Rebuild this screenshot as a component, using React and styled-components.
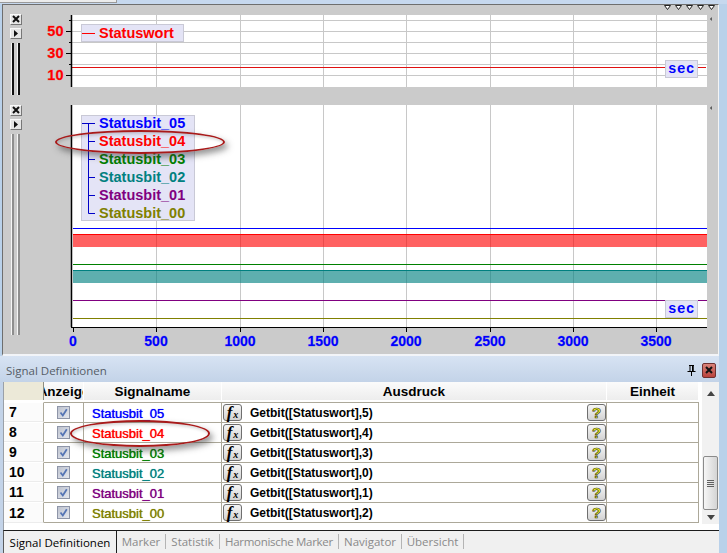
import React from "react";
import styled, { createGlobalStyle } from "styled-components";

const GlobalStyle = createGlobalStyle`
  html, body { margin: 0; padding: 0; background: #b9d1ea; overflow: hidden; }
  * { box-sizing: border-box; }
`;

const Page = styled.div`
  width: 727px;
  height: 553px;
  display: flex;
  flex-direction: column;
  background: #b9d1ea;
  font-family: "Liberation Sans", Arial, sans-serif;
`;

const TopEdge = styled.div`
  height: 4px;
  display: flex;
  background: #c6d8ee;
`;

const TopEdgeTab = styled.div`
  width: 117px;
  height: 3px;
  background: #ececec;
  border-bottom: 1px solid #9a9a9a;
  border-right: 1px solid #9a9a9a;
`;

const ChartPanel = styled.div`
  height: 353px;
  margin: 0 8px 0 2px;
  background: #cbcbcb;
  border-top: 1px solid #6e6e6e;
  border-left: 1px solid #6e6e6e;
  border-right: 1px solid #f4f4f4;
  border-bottom: 2px solid #f2f4f8;
`;

const MarkerRow = styled.div`
  height: 9px;
  display: flex;
  justify-content: flex-end;
  gap: 4px;
  padding-right: 3px;
`;

const MarkerIcon = styled.svg`
  display: block;
`;

const ChartRow = styled.div`
  display: flex;
  align-items: flex-start;
  height: ${(p) => p.$height}px;
  margin-bottom: ${(p) => p.$gap || 0}px;
`;

const Controls = styled.div`
  width: 37px;
  padding-left: 7px;
  display: flex;
  flex-direction: column;
  align-items: flex-start;
`;

const SmallButton = styled.div`
  width: 12px;
  height: 11px;
  margin-bottom: 3px;
  display: flex;
  align-items: center;
  justify-content: center;
  background: #e6e6e6;
  border: 1px solid;
  border-color: #fafafa #777 #777 #fafafa;
`;

const Splitter = styled.div`
  width: 9px;
  height: ${(p) => p.$height}px;
  margin: 1px 0 0 1px;
  display: flex;
  justify-content: space-between;
`;

const SplitterBar = styled.div`
  width: 3px;
  background: ${(p) => (p.$dark ? "#111" : "#8e8e8e")};
  border-left: 1px solid #f6f6f6;
`;

const ChartFrame = styled.div`
  position: relative;
  width: 672px;
`;

const ChartSvg = styled.svg`
  display: block;
  margin-top: ${(p) => p.$top || 0}px;
  font-family: "Liberation Sans", Arial, sans-serif;
`;

const Legend = styled.div`
  position: absolute;
  left: 41px;
  top: ${(p) => p.$top}px;
  width: ${(p) => p.$width}px;
  height: ${(p) => p.$height}px;
  display: flex;
  flex-direction: column;
  justify-content: center;
  background: #e4e4f6;
  border: 1px solid #c9c9d6;
`;

const LegendRow = styled.div`
  height: 18px;
  flex: none;
  display: flex;
  align-items: center;
  gap: 4px;
  color: ${(p) => p.$color};
  font-size: 14.5px;
  font-weight: 700;
  line-height: 18px;
  white-space: nowrap;
`;

const UnitBox = styled.div`
  position: absolute;
  left: 625px;
  top: ${(p) => p.$top}px;
  width: 33px;
  height: 18px;
  display: flex;
  align-items: center;
  justify-content: center;
  background: #e4e4f6;
  border: 1px solid #c9c9d6;
  color: #0000ff;
  font-family: "Liberation Mono", monospace;
  font-size: 14px;
  font-weight: 700;
  letter-spacing: 0.6px;
`;

const Callout = styled.div`
  position: absolute;
  left: ${(p) => p.$left}px;
  top: ${(p) => p.$top}px;
  width: ${(p) => p.$width}px;
  height: ${(p) => p.$height}px;
  border: 2px solid #a81a1a;
  border-radius: 50%;
  box-shadow: 3px 4px 6px rgba(50, 50, 50, 0.5), inset 1px 2px 3px rgba(60, 60, 60, 0.2);
  pointer-events: none;
`;

const Dock = styled.div`
  position: relative;
  flex: 1;
  margin-right: 8px;
  display: flex;
  flex-direction: column;
  background: linear-gradient(#d7e3f3, #c3d3e8 26px);
`;

const DockHeader = styled.div`
  height: 26px;
  display: flex;
  align-items: center;
  padding: 2px 3px 0 6px;
`;

const DockTitle = styled.div`
  flex: 1;
  font-family: "Open Sans", sans-serif;
  font-size: 11.5px;
  color: #555c66;
`;

const PinIcon = styled.svg`
  margin-right: 6px;
`;

const CloseButton = styled.div`
  width: 14px;
  height: 15px;
  display: flex;
  align-items: center;
  justify-content: center;
  background: linear-gradient(#d9837a, #b9423c);
  border: 1px solid #6e3030;
  border-radius: 2px;
`;

const TableArea = styled.div`
  height: 148px;
  margin-left: 3px;
  display: flex;
  background: #ffffff;
  border-left: 1px solid #9aa0a8;
`;

const Table = styled.div`
  flex: 1;
  display: flex;
  flex-direction: column;
`;

const columns = "40px 40px 138px 385px 92px";

const HeaderRow = styled.div`
  height: 18px;
  margin-bottom: 2px;
  display: grid;
  grid-template-columns: ${columns};
`;

const HeaderCell = styled.div`
  overflow: hidden;
  display: flex;
  align-items: center;
  justify-content: center;
  padding-top: 1px;
  white-space: nowrap;
  font-size: 13.5px;
  font-weight: 700;
  color: #000;
  background: linear-gradient(#fbfbfb, #ededed);
  border-right: 1px solid #ffffff;
`;

const CornerCell = styled(HeaderCell)`
  background: #ece9d8;
  border-right: 1px solid #8c8c80;
`;

const DataRow = styled.div`
  height: 20px;
  display: grid;
  grid-template-columns: ${columns};
`;

const RowNumber = styled.div`
  display: flex;
  align-items: center;
  padding-left: 5px;
  font-size: 14px;
  font-weight: 700;
  color: #000;
  background: #fbfbfb;
  border-top: 1px solid #ffffff;
  border-bottom: 1px solid #ececec;
  border-right: 1px solid #aca899;
`;

const Cell = styled.div`
  display: flex;
  align-items: center;
  justify-content: ${(p) => p.$justify || "flex-start"};
  border-top: 1px solid #aca899;
  border-right: 1px solid #aca899;
  ${(p) => p.$last && "border-bottom: 1px solid #aca899; height: 21px;"}
`;

const SignalName = styled.span`
  padding: 1px 0 0 8px;
  font-size: 13px;
  color: ${(p) => p.$color};
  text-shadow: 0 0 0.7px ${(p) => p.$color};
`;

const Expression = styled.span`
  flex: 1;
  padding: 1px 0 0 8px;
  font-size: 12px;
  font-weight: 700;
  color: #000;
  white-space: nowrap;
`;

const GridButton = styled.div`
  width: 19px;
  height: 17px;
  flex: none;
  display: flex;
  align-items: center;
  justify-content: center;
  margin-left: 1px;
  background: linear-gradient(#f6f6f6, #d2d2d2);
  border: 1px solid #6f6f6f;
  border-radius: 3px;
`;

const FormulaGlyph = styled.span`
  font-family: "Liberation Serif", serif;
  font-style: italic;
  font-weight: 700;
  font-size: 17px;
  line-height: 15px;
  color: #000;

  sub {
    font-size: 10px;
    line-height: 0;
    vertical-align: 0;
    margin-left: 1px;
  }
`;

const HelpGlyph = styled.span`
  font-size: 15px;
  line-height: 15px;
  font-weight: 700;
  color: #ffff20;
  -webkit-text-stroke: 0.7px #3c3c20;
`;

const ScrollBar = styled.div`
  width: 17px;
  margin: 0 0 6px 1px;
  display: flex;
  flex-direction: column;
  align-items: center;
  background: #f1f1f1;
`;

const ScrollArrow = styled.div`
  height: ${(p) => p.$height}px;
  width: 100%;
  display: flex;
  align-items: center;
  justify-content: center;
`;

const ScrollTrack = styled.div`
  flex: 1;
  width: 100%;
`;

const ScrollThumb = styled.div`
  width: 15px;
  height: 54px;
  flex: none;
  display: flex;
  flex-direction: column;
  align-items: center;
  justify-content: center;
  gap: 1px;
  background: linear-gradient(90deg, #f6f6f6, #d4d4d4);
  border: 1px solid #8a8a8a;
  border-radius: 2px;
`;

const GripLine = styled.div`
  width: 7px;
  height: 1px;
  background: #606060;
`;

const TabBar = styled.div`
  flex: 1;
  margin-left: 3px;
  display: flex;
  align-items: stretch;
  background: #f0f0f0;
  border-top: 1px solid #1c1c1c;
  border-left: 1px solid #5a5a5a;
  font-family: "Open Sans", sans-serif;
  font-size: 11.5px;
`;

const ActiveTab = styled.div`
  width: 113px;
  display: flex;
  align-items: center;
  justify-content: center;
  color: #000;
  border-right: 1px solid #1c1c1c;
`;

const Tab = styled.div`
  width: ${(p) => p.$width}px;
  display: flex;
  align-items: center;
  justify-content: center;
  margin: 3px 0 4px;
  color: #8a8a8a;
  white-space: nowrap;
  letter-spacing: ${(p) => p.$tracking || 0}px;
  border-right: 1px solid #b4b4b4;
`;

const gridXs = [156, 240, 323, 406, 490, 573, 656];
const xTicks = [73, 156, 240, 323, 406, 490, 573, 656];
const xLabels = ["0", "500", "1000", "1500", "2000", "2500", "3000", "3500"];

const rows = [
  { nr: 7, name: "Statusbit_05", color: "#0000ff", bit: 5 },
  { nr: 8, name: "Statusbit_04", color: "#ff0000", bit: 4 },
  { nr: 9, name: "Statusbit_03", color: "#008000", bit: 3 },
  { nr: 10, name: "Statusbit_02", color: "#008080", bit: 0 },
  { nr: 11, name: "Statusbit_01", color: "#800080", bit: 1 },
  { nr: 12, name: "Statusbit_00", color: "#808000", bit: 2 },
];

function Marker() {
  return (
    <MarkerIcon width="7" height="5" viewBox="0 0 7 5">
      <path d="M0.5 0.5 L6.5 0.5 L3.5 4.5 Z" fill="#fff" stroke="#222" strokeWidth="1" />
    </MarkerIcon>
  );
}

function CloseGlyph() {
  return (
    <svg width="8" height="8" viewBox="0 0 8 8">
      <path d="M1 1 L7 7 M7 1 L1 7" stroke="#111" strokeWidth="2" />
    </svg>
  );
}

function ArrowGlyph() {
  return (
    <svg width="6" height="7" viewBox="0 0 6 7">
      <path d="M1 0 L5 3.5 L1 7 Z" fill="#111" />
    </svg>
  );
}

function SideTriangle({ y }) {
  return <path d={`M716.5 ${y - 5} L710.5 ${y} L716.5 ${y + 5} Z`} fill="#fff" stroke="#111" />;
}

function TreeMark({ kind }) {
  const stem =
    kind === "first" ? "M0 9.5 H13 M6.5 9.5 V18" : kind === "last" ? "M6.5 0 V9.5 H13" : "M6.5 0 V18 M6.5 9.5 H13";
  return (
    <svg width="13" height="18" viewBox="0 0 13 18">
      <path d={stem} stroke="#0000c8" fill="none" />
    </svg>
  );
}

function Checkbox() {
  return (
    <svg width="13" height="13" viewBox="0 0 13 13">
      <defs>
        <linearGradient id="cb" x1="0" y1="0" x2="1" y2="1">
          <stop offset="0" stopColor="#bcc1cd" />
          <stop offset="1" stopColor="#e6e9f0" />
        </linearGradient>
      </defs>
      <rect x="0.5" y="0.5" width="12" height="12" fill="url(#cb)" stroke="#8e95a8" />
      <path d="M3.5 6.5 L5.8 9.5 L9.8 3.2" fill="none" stroke="#5474b4" strokeWidth="1.8" />
    </svg>
  );
}

function TopChart() {
  const gridYs = [20.5, 31.5, 42.5, 53.5, 64.5, 75.5];
  return (
    <ChartSvg $top={1} width="672" height="72" viewBox="40 15 672 72">
      <rect x="72" y="15" width="635" height="72" fill="#fff" />
      {gridYs.map((y) => (
        <line key={y} x1="72" x2="707" y1={y} y2={y} stroke="#c8c8c8" />
      ))}
      {gridXs.map((x) => (
        <line key={x} x1={x + 0.5} x2={x + 0.5} y1="15" y2="87" stroke="#c8c8c8" />
      ))}
      <line x1="72" x2="706" y1="67.5" y2="67.5" stroke="#e01010" />
      <line x1="71.5" x2="71.5" y1="15" y2="87" stroke="#000" strokeWidth="1.5" />
      {[31.5, 53.5, 75.5].map((y) => (
        <line key={y} x1="66" x2="71" y1={y} y2={y} stroke="#000" />
      ))}
      {[20.5, 42.5, 64.5].map((y) => (
        <line key={y} x1="69" x2="71" y1={y} y2={y} stroke="#000" />
      ))}
      {[["50", 36], ["30", 58], ["10", 80]].map(([label, y]) => (
        <text
          key={label}
          x="63.5"
          y={y}
          textAnchor="end"
          fontSize="14.5"
          fontWeight="700"
          fill="#ff0000"
          stroke="rgba(255,0,0,0.25)"
          strokeWidth="0.8"
        >
          {label}
        </text>
      ))}
      <SideTriangle y={19} />
    </ChartSvg>
  );
}

function BottomChart() {
  return (
    <ChartSvg width="672" height="248" viewBox="40 105 672 248">
      <rect x="72" y="105" width="635" height="222" fill="#fff" />
      {gridXs.map((x) => (
        <line key={x} x1={x + 0.5} x2={x + 0.5} y1="105" y2="327" stroke="#c8c8c8" />
      ))}
      <line x1="73" x2="707" y1="228.5" y2="228.5" stroke="#0000ff" />
      <rect x="73" y="234" width="634" height="13" fill="rgba(255,0,0,0.62)" />
      <line x1="73" x2="707" y1="234.5" y2="234.5" stroke="#ff0000" />
      <line x1="73" x2="707" y1="264.5" y2="264.5" stroke="#008000" />
      <rect x="73" y="270" width="634" height="13" fill="rgba(0,128,128,0.63)" />
      <line x1="73" x2="707" y1="270.5" y2="270.5" stroke="#008080" />
      <line x1="73" x2="707" y1="300.5" y2="300.5" stroke="#800080" />
      <line x1="73" x2="707" y1="318.5" y2="318.5" stroke="#808000" />
      <line x1="71.5" x2="71.5" y1="105" y2="327" stroke="#000" strokeWidth="1.5" />
      <line x1="71" x2="707" y1="327.5" y2="327.5" stroke="#000" />
      {xTicks.map((x) => (
        <line key={x} x1={x + 0.5} x2={x + 0.5} y1="328" y2="332" stroke="#000" />
      ))}
      {xLabels.map((label, i) => (
        <text
          key={label}
          x={xTicks[i]}
          y="346"
          textAnchor="middle"
          fontSize="14"
          fontWeight="700"
          fill="#0000ff"
          stroke="rgba(0,0,255,0.25)"
          strokeWidth="0.8"
        >
          {label}
        </text>
      ))}
      <SideTriangle y={108} />
    </ChartSvg>
  );
}

export default function App() {
  return (
    <Page>
      <GlobalStyle />
      <TopEdge>
        <TopEdgeTab />
      </TopEdge>
      <ChartPanel>
        <MarkerRow>
          {[0, 1, 2, 3, 4].map((i) => (
            <Marker key={i} />
          ))}
        </MarkerRow>
        <ChartRow $height={82} $gap={9}>
          <Controls>
            <SmallButton>
              <CloseGlyph />
            </SmallButton>
            <SmallButton>
              <ArrowGlyph />
            </SmallButton>
            <Splitter $height={52}>
              <SplitterBar $dark />
              <SplitterBar $dark />
            </Splitter>
          </Controls>
          <ChartFrame>
            <TopChart />
            <Legend $top={10} $width={103} $height={18}>
              <LegendRow $color="#ff0000">
                <svg width="13" height="18" viewBox="0 0 13 18">
                  <path d="M0 9.5 H13" stroke="#ff0000" />
                </svg>
                Statuswort
              </LegendRow>
            </Legend>
            <UnitBox $top={46}>sec</UnitBox>
          </ChartFrame>
        </ChartRow>
        <ChartRow $height={242}>
          <Controls>
            <SmallButton>
              <CloseGlyph />
            </SmallButton>
            <SmallButton>
              <ArrowGlyph />
            </SmallButton>
            <Splitter $height={201}>
              <SplitterBar />
              <SplitterBar />
            </Splitter>
          </Controls>
          <ChartFrame>
            <BottomChart />
            <Legend $top={10} $width={114} $height={106}>
              {rows.map((row, i) => (
                <LegendRow key={row.name} $color={row.color}>
                  <TreeMark kind={i === 0 ? "first" : i === rows.length - 1 ? "last" : "middle"} />
                  {row.name}
                </LegendRow>
              ))}
            </Legend>
            <UnitBox $top={195}>sec</UnitBox>
            <Callout $left={15} $top={25} $width={170} $height={24} />
          </ChartFrame>
        </ChartRow>
      </ChartPanel>
      <Dock>
        <DockHeader>
          <DockTitle>Signal Definitionen</DockTitle>
          <PinIcon width="9" height="11" viewBox="0 0 9 11">
            <path d="M2 0.5 H7 M3 0.5 V6 M6 0.5 V6 M0.5 6.5 H8.5 M4.5 6.5 V11" stroke="#000" fill="none" />
            <rect x="5" y="1" width="1.5" height="5" fill="#000" />
          </PinIcon>
          <CloseButton>
            <CloseGlyph />
          </CloseButton>
        </DockHeader>
        <TableArea>
          <Table>
            <HeaderRow>
              <CornerCell />
              <HeaderCell>Anzeige</HeaderCell>
              <HeaderCell>Signalname</HeaderCell>
              <HeaderCell>Ausdruck</HeaderCell>
              <HeaderCell>Einheit</HeaderCell>
            </HeaderRow>
            {rows.map((row, i) => {
              const last = i === rows.length - 1;
              return (
                <DataRow key={row.nr}>
                  <RowNumber>{row.nr}</RowNumber>
                  <Cell $justify="center" $last={last}>
                    <Checkbox />
                  </Cell>
                  <Cell $last={last}>
                    <SignalName $color={row.color}>{row.name}</SignalName>
                  </Cell>
                  <Cell $last={last}>
                    <GridButton>
                      <FormulaGlyph>
                        f<sub>x</sub>
                      </FormulaGlyph>
                    </GridButton>
                    <Expression>Getbit([Statuswort],{row.bit})</Expression>
                    <GridButton>
                      <HelpGlyph>?</HelpGlyph>
                    </GridButton>
                  </Cell>
                  <Cell $last={last} />
                </DataRow>
              );
            })}
          </Table>
          <ScrollBar>
            <ScrollArrow $height={22}>
              <svg width="8" height="5" viewBox="0 0 8 5">
                <path d="M0 5 L4 0 L8 5 Z" fill="#444" />
              </svg>
            </ScrollArrow>
            <ScrollTrack />
            <ScrollThumb>
              <GripLine />
              <GripLine />
              <GripLine />
              <GripLine />
            </ScrollThumb>
            <ScrollArrow $height={14}>
              <svg width="8" height="5" viewBox="0 0 8 5">
                <path d="M0 0 L4 5 L8 0 Z" fill="#444" />
              </svg>
            </ScrollArrow>
          </ScrollBar>
        </TableArea>
        <TabBar>
          <ActiveTab>Signal Definitionen</ActiveTab>
          <Tab $width={49}>Marker</Tab>
          <Tab $width={54}>Statistik</Tab>
          <Tab $width={119} $tracking={-0.3}>
            Harmonische Marker
          </Tab>
          <Tab $width={63}>Navigator</Tab>
          <Tab $width={62}>Übersicht</Tab>
        </TabBar>
        <Callout $left={70} $top={64} $width={140} $height={27} />
      </Dock>
    </Page>
  );
}
